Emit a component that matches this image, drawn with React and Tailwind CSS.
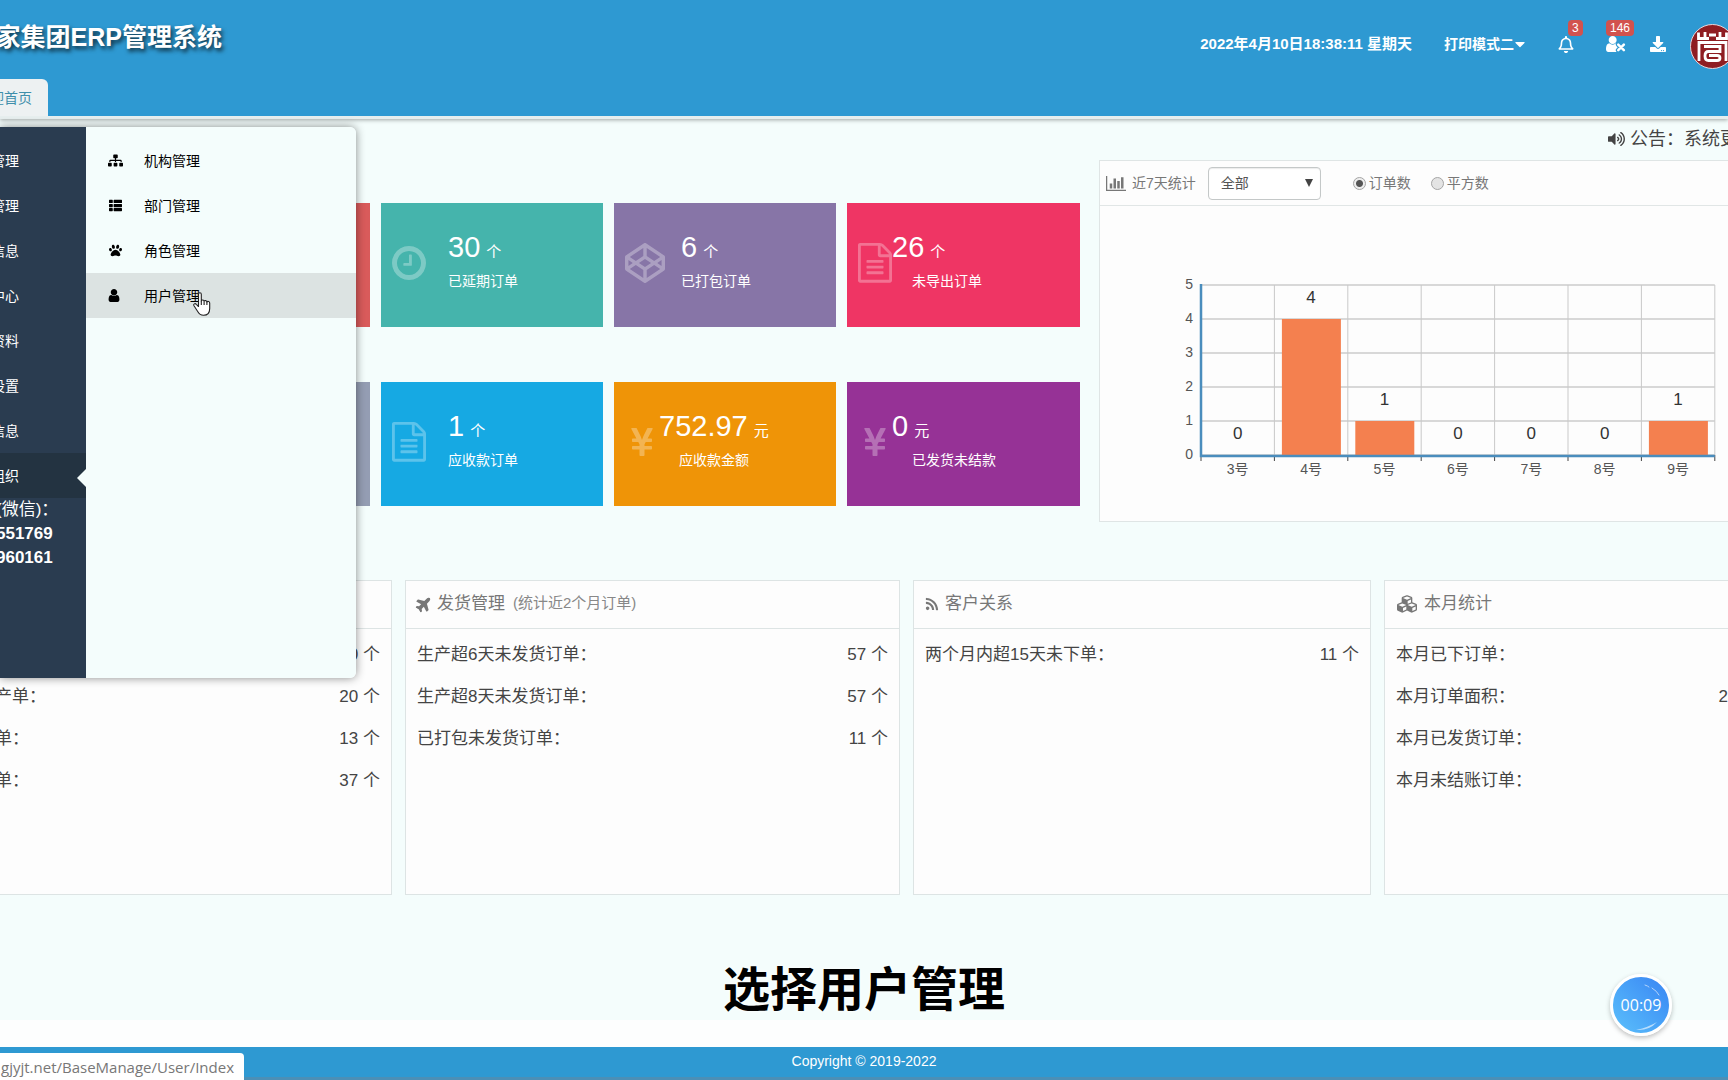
import React, { useState } from 'react';
import {
  FaCaretDown, FaCodepen, FaCubes, FaDownload, FaPaw, FaPlane, FaRegBell, FaRss,
  FaSitemap, FaThList, FaVolumeUp, FaYenSign,
} from 'react-icons/fa';

const userPath =
  'M1536 1399q0 109-62.5 187t-150.5 78h-854q-88 0-150.5-78t-62.5-187q0-85 8.5-160.5t31.5-152 58.5-131 94-89 134.5-34.5q131 128 313 128t313-128q76 0 134.5 34.5t94 89 58.5 131 31.5 152 8.5 160.5zm-256-887q0 159-112.5 271.5t-271.5 112.5-271.5-112.5-112.5-271.5 112.5-271.5 271.5-112.5 271.5 112.5 112.5 271.5z';

const UserIcon = ({ className }) => (
  <svg viewBox="256 128 1280 1536" className={className} fill="currentColor">
    <path d={userPath} />
  </svg>
);

const UserTimesIcon = ({ className }) => (
  <svg viewBox="256 128 1920 1536" className={className}>
    <path d={userPath} fill="currentColor" />
    <g fill="none" strokeLinecap="round">
      <path d="M1430 950l540 540M1970 950l-540 540" stroke="#2e99d2" strokeWidth="460" />
      <path d="M1430 950l540 540M1970 950l-540 540" stroke="currentColor" strokeWidth="240" />
    </g>
  </svg>
);

const ClockIcon = ({ className }) => (
  <svg viewBox="128 128 1536 1536" className={className} fill="currentColor">
    <path d="M1024 544v448q0 14-9 23t-23 9h-320q-14 0-23-9t-9-23v-64q0-14 9-23t23-9h224v-352q0-14 9-23t23-9h64q14 0 23 9t9 23zm416 352q0-148-73-273t-198-198-273-73-273 73-198 198-73 273 73 273 198 198 273 73 273-73 198-198 73-273zm224 0q0 209-103 385.5t-279.5 279.5-385.5 103-385.5-103-279.5-279.5-103-385.5 103-385.5 279.5-279.5 385.5-103 385.5 103 279.5 279.5 103 385.5z" />
  </svg>
);

const FileIcon = ({ className }) => (
  <svg viewBox="128 0 1536 1792" className={className} fill="currentColor">
    <path d="M1596 380q28 28 48 76t20 88v1152q0 40-28 68t-68 28h-1344q-40 0-68-28t-28-68v-1600q0-40 28-68t68-28h896q40 0 88 20t76 48zm-444-244v376h376q-10-29-22-41l-313-313q-12-12-41-22zm384 1528v-1024h-416q-40 0-68-28t-28-68v-416h-768v1536h1280zm-1024-864q0-14 9-23t23-9h704q14 0 23 9t9 23v64q0 14-9 23t-23 9h-704q-14 0-23-9t-9-23v-64zm736 224q14 0 23 9t9 23v64q0 14-9 23t-23 9h-704q-14 0-23-9t-9-23v-64q0-14 9-23t23-9h704zm0 256q14 0 23 9t9 23v64q0 14-9 23t-23 9h-704q-14 0-23-9t-9-23v-64q0-14 9-23t23-9h704z" />
  </svg>
);

const BarChartIcon = ({ className }) => (
  <svg viewBox="0 128 2048 1536" className={className} fill="currentColor">
    <path d="M640 896v512h-256v-512h256zm384-512v1024h-256v-1024h256zm1024 1152v128h-2048v-1536h128v1408h1920zm-640-896v768h-256v-768h256zm384-384v1152h-256v-1152h256z" />
  </svg>
);

const SealLogo = ({ className }) => (
  <svg viewBox="0 0 45 45" className={className}>
    <circle cx="22.5" cy="22.5" r="22" fill="#8f1d22" stroke="#e8d5d8" />
    <g fill="none" stroke="#fff" strokeWidth="2.8">
      <path d="M8.5 8.500v6H19M15 8v6M26 14.500h10.500v-6M30 8v6M19 11h7" />
      <path d="M9 37V18.500h27V37" />
      <path d="M14 22.500h16v5H18.500q-3.500 0-3.500 4.500t3.500 4.500H27q3 0 3-2.500t-3-2.500h-8" />
    </g>
  </svg>
);

const HandCursor = ({ className }) => (
  <svg viewBox="0 0 18 24" className={className} fill="#fff" stroke="#222" strokeWidth="1.1" strokeLinejoin="round">
    <path d="M5.5 14.5V2.3c0-2 2.8-2 2.8 0V9c.3-1.4 2.7-1.2 2.8.3.5-1.2 2.7-.9 2.8.7.6-1 2.8-.7 2.8 1v5.5c0 4-2.2 6.8-6.2 6.8-3.2 0-4.6-1.6-5.8-3.8L1 13.8c-1-1.7 1.1-2.9 2.3-1.5z" />
    <path d="M8.3 9v4M11.1 9.500V13M13.900 10v3" fill="none" />
  </svg>
);

const sideItems = ['管理', '管理', '信息', '中心', '资料', '设置', '信息', '组织'];

const subItems = [
  { label: '机构管理', icon: FaSitemap },
  { label: '部门管理', icon: FaThList },
  { label: '角色管理', icon: FaPaw },
  { label: '用户管理', icon: UserIcon },
];

const cards = [
  { color: 'bg-[#d95b5b]' },
  { color: 'bg-[#45b4ac]', icon: ClockIcon, iconClass: 'w-[34px]', value: '30', unit: '个', label: '已延期订单' },
  { color: 'bg-[#8775a7]', icon: FaCodepen, iconClass: 'w-10 h-10', value: '6', unit: '个', label: '已打包订单' },
  { color: 'bg-[#ef3564]', icon: FileIcon, iconClass: 'w-[34px]', value: '26', unit: '个', label: '未导出订单', compact: true },
  { color: 'bg-[#949db3]' },
  { color: 'bg-[#16a9e3]', icon: FileIcon, iconClass: 'w-[34px]', value: '1', unit: '个', label: '应收款订单' },
  { color: 'bg-[#ef9407]', icon: FaYenSign, iconClass: 'w-[34px] h-8', value: '752.97', unit: '元', label: '应收款金额', compact: true },
  { color: 'bg-[#963296]', icon: FaYenSign, iconClass: 'w-[34px] h-8', value: '0', unit: '元', label: '已发货未结款', compact: true },
];

const panels = [
  {
    edge: 'border-l-0',
    pad: '-ml-[5px] pr-[11px]',
    rows: [['', '0 个'], ['产单：', '20 个'], ['单：', '13 个'], ['单：', '37 个']],
  },
  {
    title: '发货管理',
    note: '(统计近2个月订单)',
    icon: FaPlane,
    iconClass: 'w-[14px] h-[18px] -rotate-45 scale-120',
    pad: 'px-[11px]',
    rows: [['生产超6天未发货订单：', '57 个'], ['生产超8天未发货订单：', '57 个'], ['已打包未发货订单：', '11 个']],
  },
  {
    title: '客户关系',
    icon: FaRss,
    iconClass: 'w-[14px] h-[14px]',
    pad: 'px-[11px]',
    rows: [['两个月内超15天未下单：', '11 个']],
  },
  {
    title: '本月统计',
    icon: FaCubes,
    iconClass: 'w-[22px] h-5',
    edge: 'border-r-0',
    pad: 'pl-[11px]',
    rows: [['本月已下订单：', ''], ['本月订单面积：', '2'], ['本月已发货订单：', ''], ['本月未结账订单：', '']],
  },
];

const chartData = [
  { day: '3号', value: 0 },
  { day: '4号', value: 4 },
  { day: '5号', value: 1 },
  { day: '6号', value: 0 },
  { day: '7号', value: 0 },
  { day: '8号', value: 0 },
  { day: '9号', value: 1 },
];

const Header = () => (
  <header className="bg-[#2e99d2] border-b-[3px] border-[#e6eeee] shadow-[0_1px_4px_rgba(0,0,0,0.35)]">
    <div className="flex items-start justify-between h-[79px]">
      <div className="flex justify-end w-[222px] pt-[17px]">
        <h1 className="text-[25px] leading-10 font-bold text-white whitespace-nowrap [text-shadow:2px_3px_4px_rgba(0,0,0,0.7)]">
          家集团ERP管理系统
        </h1>
      </div>
      <div className="flex items-center mt-6 -mr-[7px] text-white">
        <div className="flex items-center h-[45px] pb-[5px]">
          <span className="text-[15px] font-bold whitespace-nowrap mr-8">2022年4月10日18:38:11 星期天</span>
          <button className="flex items-center text-sm font-bold mr-8">
            打印模式二
            <FaCaretDown className="w-3 h-4" />
          </button>
          <button className="relative mr-8" aria-label="消息">
            <FaRegBell className="w-4 h-[17px]" />
            <span className="absolute -top-4 left-[10px] rounded bg-[#d2524e] px-1 text-xs leading-4">3</span>
          </button>
          <button className="relative mr-6" aria-label="客户">
            <UserTimesIcon className="w-5 h-4" />
            <span className="absolute -top-4 left-0 rounded bg-[#d2524e] px-1 text-xs leading-4">146</span>
          </button>
          <button className="mr-6" aria-label="下载">
            <FaDownload className="w-4 h-4" />
          </button>
        </div>
        <SealLogo className="w-[45px] h-[45px] shrink-0" />
      </div>
    </div>
    <nav className="flex">
      <a href="#home" className="flex items-center justify-end w-12 h-[37px] pr-4 rounded-tr-md bg-[#edf1f2] text-sm text-[#3f8fab] whitespace-nowrap overflow-hidden">
        <span>迎首页</span>
      </a>
    </nav>
  </header>
);

const SideMenu = () => (
  <div className="absolute left-0 top-[127px] z-20 flex h-[551px] rounded-r-md shadow-[0_0_10px_rgba(0,0,0,0.45)]">
    <nav className="w-[86px] pt-[11px] bg-[#2a3c50] text-white overflow-hidden">
      {sideItems.map((item, i) => {
        const active = i === sideItems.length - 1;
        return (
          <a
            key={i}
            href="#menu"
            className={`relative flex items-center justify-end h-[45px] pr-[67px] text-sm whitespace-nowrap ${active ? 'bg-[#233341]' : ''}`}
          >
            <span>{item}</span>
            {active && (
              <span className="absolute right-0 top-4 border-y-[9px] border-r-[9px] border-y-transparent border-r-[#f4fdfc]" />
            )}
          </a>
        );
      })}
      <div className="-ml-1 text-[17px] leading-6 whitespace-nowrap">
        <p>(微信)：</p>
        <p className="font-bold">551769</p>
        <p className="font-bold">960161</p>
      </div>
    </nav>
    <nav className="w-[270px] pt-[11px] bg-[#f4fdfc] rounded-r-md">
      {subItems.map(({ label, icon: Icon }) => (
        <a
          key={label}
          href="#sub"
          className={`relative flex items-center h-[45px] pl-[22px] text-sm text-black ${label === '用户管理' ? 'bg-[#dce3e2]' : ''}`}
        >
          <span className="flex w-9">
            <Icon className={label === '用户管理' ? 'w-3 h-[13px]' : 'w-[15px] h-[13px]'} />
          </span>
          {label}
          {label === '用户管理' && <HandCursor className="absolute left-[107px] top-[19px] w-[18px] h-6" />}
        </a>
      ))}
    </nav>
  </div>
);

const StatCard = ({ color, icon: Icon, iconClass, value, unit, label, compact }) => (
  <div className={`flex h-[124px] min-w-0 text-white ${color}`}>
    {Icon && (
      <>
        <div className={`flex items-center h-[120px] pl-[11px] shrink-0 ${compact ? 'w-[45px]' : 'w-[67px]'}`}>
          <Icon className={`shrink-0 opacity-30 ${iconClass}`} />
        </div>
        <div className="pt-6 whitespace-nowrap">
          <div className="h-10 text-[29px] leading-10">
            {value}
            <span className="text-[15px] ml-[6px]">{unit}</span>
          </div>
          <div className={`text-sm leading-7 ${compact ? 'pl-5' : ''}`}>{label}</div>
        </div>
      </>
    )}
  </div>
);

const BarChart = ({ data }) => {
  const left = 101;
  const step = 73.4;
  const bottom = 249;
  const unit = 34;
  const right = left + step * data.length;

  return (
    <svg viewBox="0 0 628 315" className="block w-full" fontFamily="'Liberation Sans', 'Noto Sans CJK SC', sans-serif">
      {[0, 1, 2, 3, 4, 5].map((n) => (
        <g key={n}>
          <line x1={left} x2={right} y1={bottom - n * unit} y2={bottom - n * unit} stroke="#d8d8d8" strokeWidth="2" />
          <text x="93" y={bottom - n * unit + 4} textAnchor="end" fontSize="14" fill="#555">{n}</text>
        </g>
      ))}
      {data.map((d, i) => {
        const x = left + step * i;
        return (
          <g key={d.day}>
            <line x1={x + step} x2={x + step} y1={bottom - 5 * unit} y2={bottom} stroke="#c9c9c9" />
            {d.value > 0 && (
              <rect x={x + 7.5} y={bottom - d.value * unit} width="59" height={d.value * unit} fill="#f4804f" />
            )}
            <text x={x + step / 2} y={bottom - d.value * unit - 16} textAnchor="middle" fontSize="17" fill="#333">{d.value}</text>
            <text x={x + step / 2} y="268" textAnchor="middle" fontSize="14" fill="#555">{d.day}</text>
            <line x1={x + step} x2={x + step} y1={bottom} y2={bottom + 6} stroke="#444" />
          </g>
        );
      })}
      <line x1={left} x2={left} y1={bottom} y2={bottom + 6} stroke="#444" />
      <path d={`M${left} ${bottom - 5 * unit - 1}V${bottom + 1}H${right}`} fill="none" stroke="#4a8dbd" strokeWidth="2.5" />
    </svg>
  );
};

const ChartPanel = () => {
  const [mode, setMode] = useState('count');
  const radioClass =
    'appearance-none w-[13px] h-[13px] rounded-full border border-[#a5a5a5] bg-[#e4e4e4] checked:bg-[radial-gradient(circle,#555_0_3px,#eee_4px)]';

  return (
    <section className="border border-r-0 border-[#dfe5e5] bg-[#fdfdfd]">
      <div className="flex items-center h-[45px] pl-[6px] border-b border-[#e1e6e6] text-sm text-[#777] whitespace-nowrap">
        <BarChartIcon className="w-5 h-[15px] mr-[6px]" />
        <h2>近7天统计</h2>
        <div className="relative ml-3 mr-8">
          <select
            aria-label="统计范围"
            className="appearance-none block w-[113px] h-[33px] pl-3 rounded border border-[#c4c8c8] bg-white text-sm text-[#555] shadow-[inset_0_1px_1px_rgba(0,0,0,0.08)]"
          >
            <option>全部</option>
          </select>
          <span className="absolute right-2 top-3 border-x-4 border-t-8 border-x-transparent border-t-[#444] pointer-events-none" />
        </div>
        <label className="flex items-center gap-[3px] mr-5">
          <input type="radio" name="mode" checked={mode === 'count'} onChange={() => setMode('count')} className={radioClass} />
          订单数
        </label>
        <label className="flex items-center gap-[3px]">
          <input type="radio" name="mode" checked={mode === 'area'} onChange={() => setMode('area')} className={radioClass} />
          平方数
        </label>
      </div>
      <BarChart data={chartData} />
    </section>
  );
};

const InfoPanel = ({ title, note, icon: Icon, iconClass, edge = '', pad, rows }) => (
  <section className={`h-[315px] min-w-0 border border-[#dde4e4] bg-[#fdfdfd] ${edge}`}>
    <div className="flex items-center h-12 px-[11px] pb-[2px] border-b border-[#dde4e4] text-[17px] text-[#777] whitespace-nowrap">
      {Icon && <Icon className={`mr-[6px] shrink-0 ${iconClass}`} />}
      <h2>{title}</h2>
      {note && <span className="ml-2 text-[15px] text-[#888]">{note}</span>}
    </div>
    <ul className={`pt-[5px] text-[17px] leading-[42px] text-[#444] whitespace-nowrap ${pad}`}>
      {rows.map(([label, value], i) => (
        <li key={i} className="flex justify-between">
          <span>{label}</span>
          <span>{value}</span>
        </li>
      ))}
    </ul>
  </section>
);

const App = () => {
  return (
    <div className="relative flex flex-col min-h-screen overflow-hidden bg-[#f4fdfc] font-['Liberation_Sans','Noto_Sans_CJK_SC',sans-serif]">
      <Header />
      <SideMenu />

      <main className="flex flex-col flex-1">
        <div className="flex justify-end h-[41px]">
          <div className="flex items-center w-[120px] gap-[5px] pb-px text-lg text-[#444] whitespace-nowrap">
            <FaVolumeUp className="w-[17px] h-4 shrink-0" />
            <span>公告：系统更</span>
          </div>
        </div>

        <div className="grid grid-cols-[1080fr_629fr] items-start gap-[19px]">
          <div className="grid grid-cols-[370fr_222fr_222fr_233fr] gap-x-[11px] gap-y-[55px] pt-[43px]">
            {cards.map((card, i) => (
              <StatCard key={i} {...card} />
            ))}
          </div>
          <ChartPanel />
        </div>

        <div className="grid grid-cols-[392fr_495fr_458fr_344fr] gap-[13px] mt-[58px]">
          {panels.map((panel, i) => (
            <InfoPanel key={i} {...panel} />
          ))}
        </div>

        <p className="flex flex-1 items-center justify-center pt-[65px] text-[47px] leading-[60px] font-bold text-black [text-shadow:0_0_4px_#fff]">
          选择用户管理
        </p>
      </main>

      <div className="h-[27px] bg-[#fdfefe]" />
      <footer className="h-[33px] border-b-[3px] border-[#4b8fb6] bg-[#2e99d2] text-center text-sm leading-7 text-white">
        Copyright © 2019-2022
      </footer>

      <div className="absolute bottom-0 left-0 flex items-center justify-end w-[244px] h-[27px] pr-[10px] pt-px rounded-tr bg-white text-[15px] text-[#777] overflow-hidden font-['Open_Sans',sans-serif]">
        <span>gjyjt.net/BaseManage/User/Index</span>
      </div>

      <div className="absolute bottom-[44px] right-[56px] flex items-center justify-center w-[62px] h-[62px] rounded-full border-[3px] border-white bg-linear-to-tr from-[#5cc0fb] to-[#3a84f3] text-base text-white shadow-[0_2px_5px_rgba(0,0,0,0.25)] font-['Open_Sans',sans-serif]">
        <svg viewBox="0 0 56 56" className="absolute inset-0 w-full h-full" fill="none" stroke="#fff" strokeLinecap="round" opacity="0.6">
          <path d="M32 8q3 1 4 2M39 11q5 3 7 7" />
          <path d="M23 53q13 1 21-8-8 5-21 8z" fill="#fff" stroke="none" />
        </svg>
        00:09
      </div>
    </div>
  );
};

export default App;
